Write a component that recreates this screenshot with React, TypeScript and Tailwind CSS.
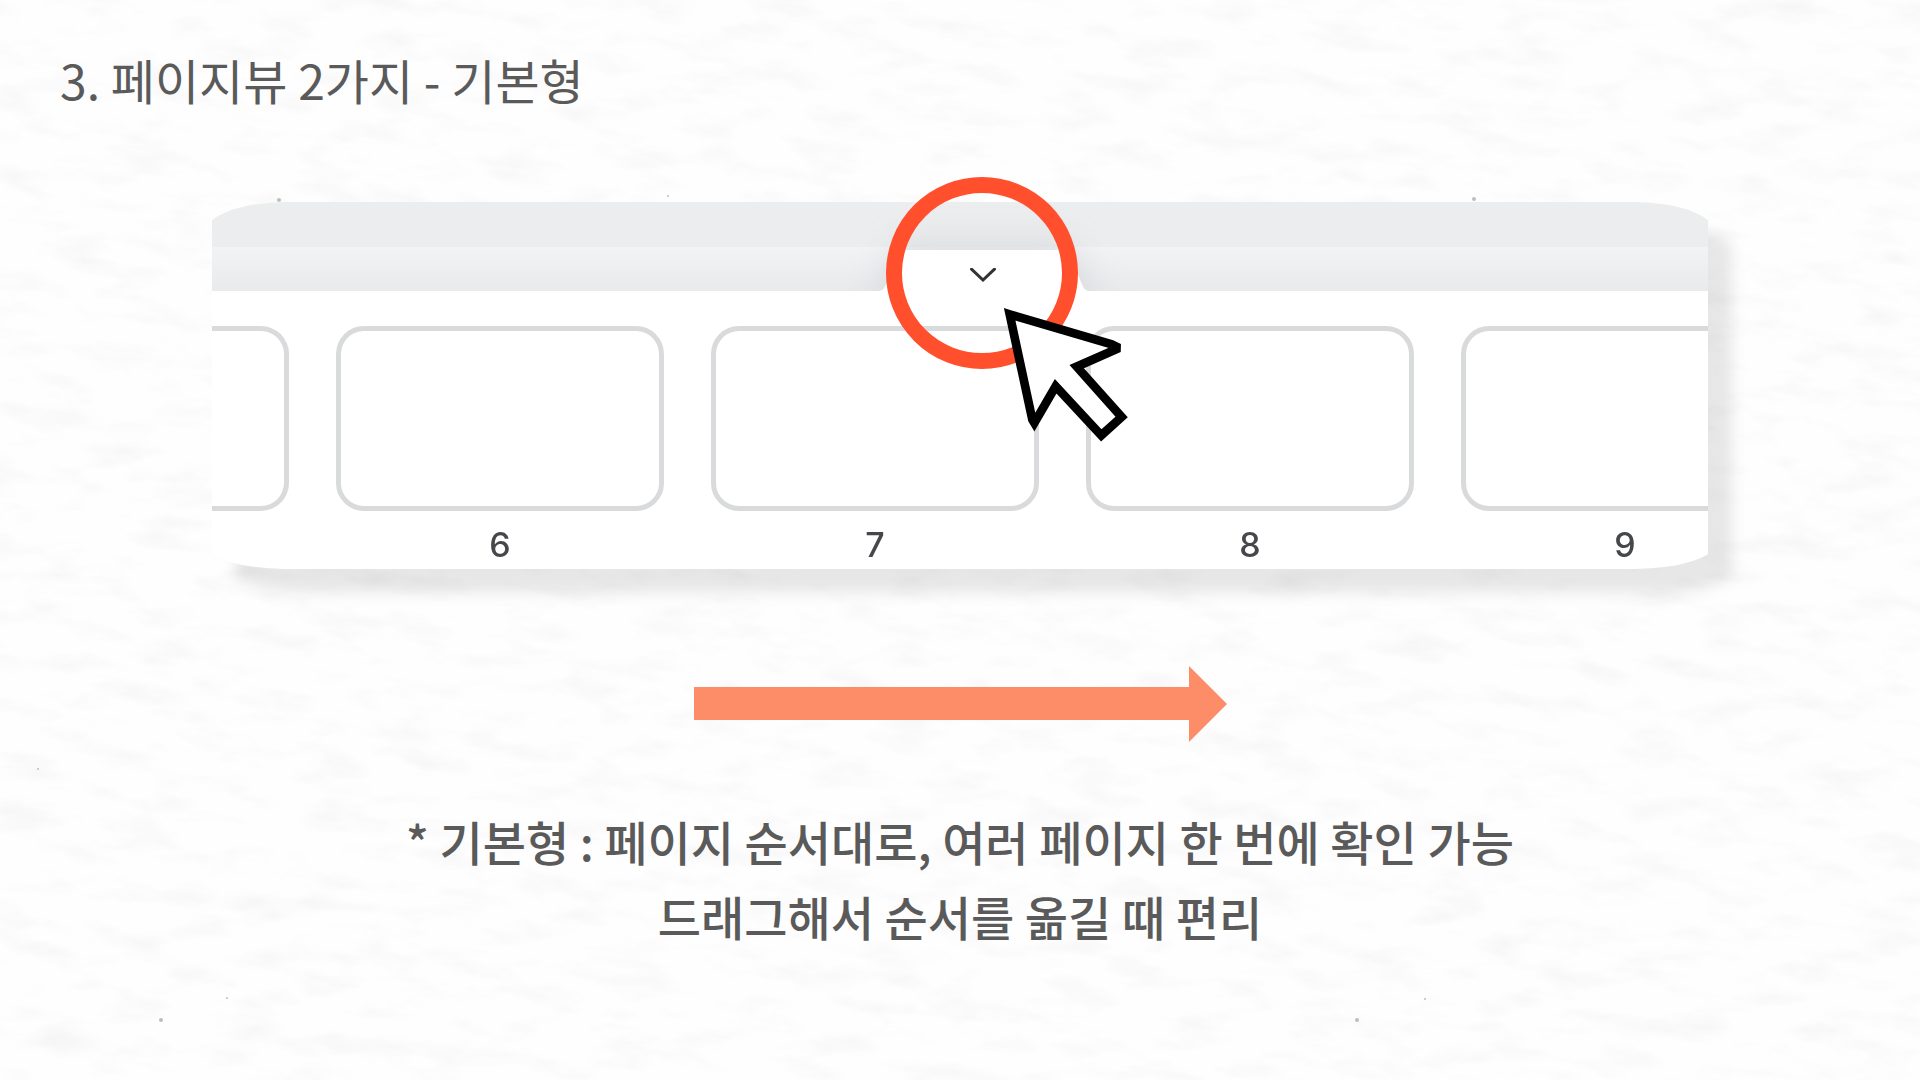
import React from 'react'

const PAGES = [6, 7, 8, 9]

// faint fibrous paper grain behind everything
function PaperTexture() {
  return (
    <svg className="absolute inset-0 w-full h-full" aria-hidden="true">
      <filter id="paper" x="0" y="0" width="100%" height="100%">
        <feTurbulence type="fractalNoise" baseFrequency="0.016 0.045" numOctaves="6" seed="21" />
        <feColorMatrix values="0 0 0 0 0.9  0 0 0 0 0.9  0 0 0 0 0.9  1.5 0.5 0 0 -0.95" />
      </filter>
      <g transform="rotate(5)">
        <rect x="-300" y="-400" width="2800" height="1900" filter="url(#paper)" />
      </g>
      <g fill="#bdbdbd">
        <circle cx="161" cy="1020" r="2" />
        <circle cx="227" cy="998" r="1" />
        <circle cx="279" cy="200" r="2" />
        <circle cx="1474" cy="199" r="2" />
        <circle cx="668" cy="196" r="1" />
        <circle cx="1357" cy="1020" r="2" />
        <circle cx="38" cy="769" r="1" />
        <circle cx="1425" cy="999" r="1" />
      </g>
    </svg>
  )
}

// raised white tab that sits on the toolbar edge
function Tab() {
  return (
    <svg
      viewBox="0 0 260 89"
      className="absolute bottom-0 left-1/2 w-[260px] h-[89px] ml-[-106px] overflow-visible"
      aria-hidden="true"
    >
      <defs>
        <filter id="tabShade" x="-40%" y="-100%" width="180%" height="300%">
          <feGaussianBlur stdDeviation="16" />
        </filter>
      </defs>
      <path d="M10 110L46 40H214L250 110Z" fill="#d3d5d8" opacity="0.7" filter="url(#tabShade)" />
      <path d="M24 89C30 89 31 85 35 75C40 62 44 48 56 48H204C216 48 220 62 225 75C229 85 230 89 236 89Z" fill="#fff" />
    </svg>
  )
}

function PageStrip() {
  return (
    <div className="drop-shadow-[24px_24px_7px_rgba(0,0,0,0.09)]">
      <div className="overflow-hidden">
        <div className="-mx-[10px] px-[10px] overflow-hidden bg-white rounded-t-[84px_34px] rounded-b-[84px_28px]">
          <div className="relative -mx-[10px] overflow-hidden">
            <div className="h-[45px] bg-[#ebedee]" />
            <div className="h-[44px] bg-linear-to-b from-[#f2f3f5] to-[#e9eaec]" />
            <Tab />
          </div>
          <ol className="flex gap-[47px] pt-[35px]">
            {/* previous page, scrolled almost out of view */}
            <li className="w-[77px] h-[185px] shrink-0 rounded-r-[28px] border-[5px] border-l-0 border-[#d9dadc]" />
            {PAGES.map((n) => (
              <li key={n} className="w-[328px] shrink-0 flex flex-col items-center">
                <div className="w-full h-[185px] rounded-[28px] border-[5px] border-[#d9dadc]" />
                <span className="mt-[10px] h-12 leading-[48px] font-['Inter'] text-[34px] font-medium text-[#46474b]">
                  {n}
                </span>
              </li>
            ))}
          </ol>
        </div>
      </div>
    </div>
  )
}

function Cursor() {
  return (
    <svg viewBox="430 440 378 408" className="absolute left-[117px] top-[130px] w-[126px] h-[136px]" aria-hidden="true">
      <path
        d="M450 462L756 552L778 563L651 619L786 770L725 825L588 678L524 788L518 778Z"
        fill="#fff"
        stroke="#000"
        strokeWidth="26"
        strokeMiterlimit="2"
      />
    </svg>
  )
}

export default function App() {
  return (
    <main className="relative min-h-screen overflow-hidden bg-[#fefefe] font-['Inter','Noto_Sans_CJK_KR',sans-serif] text-[#5a5a5a]">
      <PaperTexture />
      <div className="relative flex flex-col">
        <h1 className="px-[60px] pt-11 h-[202px] text-5xl leading-[70px] font-['Noto_Sans_CJK_KR',sans-serif]">
          3. 페이지뷰 2가지 - 기본형
        </h1>

        <section className="relative w-full max-w-[1496px] mx-auto">
          <PageStrip />
          {/* highlighted collapse button with the pointer on top */}
          <div className="absolute -top-[25px] left-1/2 ml-[-74px]">
            <button
              type="button"
              aria-label="페이지 목록 접기"
              className="flex items-center justify-center size-48 rounded-full border-[16px] border-[#ff4f2d]"
            >
              <svg viewBox="0 0 26 14" className="w-[26px] h-[14px] mt-[3px] ml-[2px]" fill="none" aria-hidden="true">
                <path d="M1.5 1.200L13 12L24.500 1.200" stroke="#333" strokeWidth="3" strokeLinecap="round" />
              </svg>
            </button>
            <Cursor />
          </div>
        </section>

        <svg viewBox="0 0 533 76" className="mx-auto mt-[97px] w-[533px] h-[76px]" aria-hidden="true">
          <path d="M0 21H495V0L533 38L495 76V54H0Z" fill="#fc8d68" />
        </svg>

        <p className="mt-[61px] text-center text-[47px] leading-[75px] font-medium font-['Noto_Sans_CJK_KR',sans-serif]">
          * 기본형 : 페이지 순서대로, 여러 페이지 한 번에 확인 가능
          <br />
          드래그해서 순서를 옮길 때 편리
        </p>
      </div>
    </main>
  )
}
